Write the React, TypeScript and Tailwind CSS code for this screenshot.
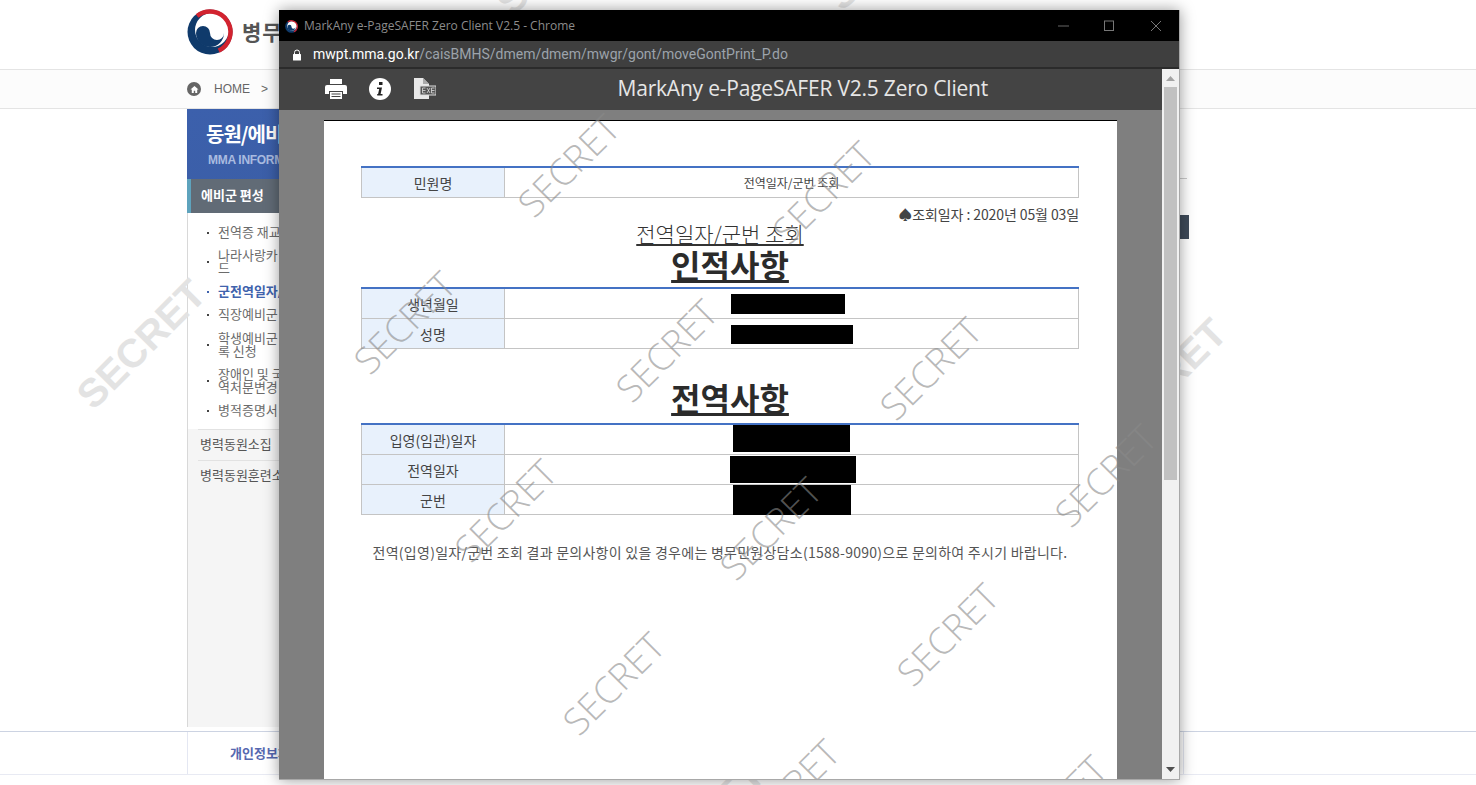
import React from 'react';

type Bar = { left: number; top: number; width: number; height: number };

const sideItems = [
  { lines: ['전역증 재교부'], h: 23 },
  { lines: ['나라사랑카', '드'], h: 36 },
  { lines: ['군전역일자/군번 조회'], h: 23, active: true },
  { lines: ['직장예비군'], h: 23 },
  { lines: ['학생예비군 편성', '록 신청'], h: 38 },
  { lines: ['장애인 및 국', '역처분변경'], h: 34 },
  { lines: ['병적증명서'], h: 25 },
];

const thinMarks = [
  [568, 165], [823, 192], [404, 322], [666, 350], [930, 368], [505, 510],
  [770, 528], [1105, 475], [947, 634], [613, 683], [788, 790], [1055, 806],
];
const boldMarks = [
  [141, 344], [1162, 383], [560, -50], [890, -55], [700, 825],
];

const Taegeuk = ({ size }: { size: number }) => (
  <svg width={size} height={size} viewBox="0 0 46 46" className="shrink-0">
    <circle cx="23" cy="23" r="22.5" fill="#0f3a6b" />
    <circle cx="25" cy="21" r="17" fill="#fff" />
    <path d="M10.1 7.1A20.5 20.5 0 1 1 31.7 41.6" fill="none" stroke="#d2232f" strokeWidth="4.5" />
    <path d="M9 24a7 7 0 0 1 14 0a7 7 0 0 0 14 0a14 14 0 0 1-28 0Z" fill="#0f3a6b" />
  </svg>
);

const Row = ({ label, value, bar, small, h = 30 }: { label: string; value?: string; bar?: Bar; small?: boolean; h?: number }) => (
  <div className="flex border-b border-[#c4c4c4]" style={{ height: h }}>
    <div className="w-[144px] shrink-0 border-x border-[#c4c4c4] bg-[#e8f1fc] pt-[1px] flex items-center justify-center text-[14px] text-[#444]">
      {label}
    </div>
    <div className={`relative flex-1 border-r border-[#c4c4c4] flex items-center justify-center text-[#444] ${small ? 'text-[12px]' : 'text-[14px]'}`}>
      {value}
      {bar && <div className="absolute bg-black" style={bar} />}
    </div>
  </div>
);

const Table = ({ children }: { children: React.ReactNode }) => (
  <div className="border-t-2 border-[#4472c4]">{children}</div>
);

export default function App() {
  return (
    <div className="relative h-[785px] w-[1476px] overflow-hidden bg-white font-['Noto_Sans_CJK_KR',sans-serif]">
      {/* page behind the popup */}
      <header className="h-[70px] border-b border-[#e4e4e4] flex items-center pl-[187px] gap-[9px] pb-[6px]">
        <Taegeuk size={46} />
        <span className="text-[21px] font-bold text-[#555] tracking-[1px]">병무청</span>
      </header>
      <div className="h-[39px] border-b border-[#e4e4e4] bg-[#fcfcfc] flex items-center pl-[187px] text-[12px] text-[#666]">
        <span className="w-[14px] h-[14px] rounded-full bg-[#666] flex items-center justify-center">
          <svg width="9" height="9" viewBox="0 0 10 10"><path d="M5 1 0.5 5H2v4h2.2V6.5h1.6V9H8V5h1.5z" fill="#fff" /></svg>
        </span>
        <span className="ml-[13px] font-['Liberation_Sans',sans-serif]">HOME</span>
        <span className="ml-[11px] font-['Liberation_Sans',sans-serif]">&gt;</span>
      </div>

      <div className="flex h-[622px] pl-[187px] pr-[287px]">
        <aside className="w-[240px] h-[618px] border-l border-[#d8d8d8] flex flex-col">
          <div className="h-[70px] -ml-px bg-gradient-to-br from-[#3c60ac] to-[#3b5ea6] pl-[19px] pt-[10px]">
            <div className="text-[20px] font-bold leading-[30px] text-white tracking-[-1px]">동원/에비군</div>
            <div className="pl-[2px] pt-[3px] text-[12px] font-bold leading-[16px] text-[#a9bbe0] font-['Liberation_Sans',sans-serif] tracking-[-0.3px]">MMA INFORMATION</div>
          </div>
          <div className="h-[34px] -ml-px border-l-4 border-[#5ea3bd] bg-[#616b76] pl-[10px] pb-[3px] flex items-center text-[13px] font-bold text-white">에비군 편성</div>
          <ul className="pt-[7px] pb-[7px] pl-[19px]">
            {sideItems.map((item) => (
              <li key={item.lines[0]} className="relative flex items-center pl-[11px] text-[13px] leading-[13px]" style={{ height: item.h }}>
                <span className={`absolute left-0 top-1/2 w-[2px] h-[2px] ${item.active ? 'bg-[#3f63ad]' : 'bg-[#444]'}`} />
                <span className={`whitespace-nowrap ${item.active ? 'font-bold text-[#3f63ad]' : 'text-[#6b6b6b]'}`}>
                  {item.lines.map((l) => <div key={l}>{l}</div>)}
                </span>
              </li>
            ))}
          </ul>
          <div className="flex-1 bg-[#f5f5f5] px-[10px] text-[13px] text-[#555]">
            <div className="h-[31px] border-t border-[#e2e2e2] pb-[3px] flex items-center pl-[2px]">병력동원소집</div>
            <div className="h-[31px] border-t border-[#e2e2e2] pb-[3px] flex items-center pl-[2px]">병력동원훈련소</div>
          </div>
        </aside>
        <div className="flex-1 pt-[69px]">
          <div className="ml-[752px] w-[8px] border-t border-[#ccc]" />
          <div className="ml-[752px] mt-[36px] w-[10px] h-[24px] bg-[#3e4a59]" />
        </div>
      </div>

      <footer className="h-[44px] border-t border-b border-t-[#ccd3e2] border-b-[#e8eaf3] pl-[187px] flex">
        <div className="w-[997px] border-x border-[#e4e7f2] pl-[42px] flex items-center text-[13px] font-bold text-[#5668b0]">개인정보처리방침</div>
      </footer>

      {/* page watermark, lies over the page content */}
      {boldMarks.map(([x, y]) => (
        <span
          key={`${x}-${y}`}
          className="absolute -translate-x-1/2 -translate-y-1/2 -rotate-45 text-[40px] font-bold leading-none text-[#e3e3e3] font-['Liberation_Sans',sans-serif] pointer-events-none"
          style={{ left: x, top: y }}
        >
          SECRET
        </span>
      ))}

      {/* popup window */}
      <div className="absolute left-[279px] top-[10px] w-[901px] h-[770px] flex flex-col border-r border-b border-[#a8a8a8] shadow-[0_0_14px_rgba(0,0,0,0.4)]">
        <div className="h-[31px] bg-black flex items-center pl-[6px] pt-[1px] text-[12px] text-[#8c8c8c] font-['Open_Sans',sans-serif]">
          <Taegeuk size={13} />
          <span className="ml-[6px]">MarkAny e-PageSAFER Zero Client V2.5 - Chrome</span>
          <div className="ml-auto flex items-center">
            <svg width="46" height="12" viewBox="0 0 46 12"><path d="M0 6h11" stroke="#666" /></svg>
            <svg width="46" height="12" viewBox="0 0 46 12"><rect x="0.5" y="1" width="9" height="9.5" fill="none" stroke="#777" /></svg>
            <svg width="29" height="12" viewBox="0 0 29 12"><path d="M1 1l10 10M11 1 1 11" stroke="#777" /></svg>
          </div>
        </div>
        <div className="h-[28px] bg-[#3f3f3f] border-b-2 border-[#2b2b2b] flex items-center pl-[13px] pt-[1px] text-[14px] font-['Roboto',sans-serif]">
          <svg width="10" height="12" viewBox="0 0 10 12"><path d="M2.5 5V3.5a2.5 2.5 0 0 1 5 0V5" fill="none" stroke="#fff" /><rect x="1" y="5" width="8" height="6.5" rx="0.5" fill="#fff" /></svg>
          <span className="ml-[11px] text-white">mwpt.mma.go.kr</span>
          <span className="text-[#9ca3ab]">/caisBMHS/dmem/dmem/mwgr/gont/moveGontPrint_P.do</span>
        </div>
        <div className="flex flex-1 min-h-0">
          <div className="flex-1 min-w-0 bg-[#7f7f7f] overflow-hidden">
            <div className="h-[41px] bg-[#444] flex items-center pl-[46px] pr-[174px] pb-[2px]">
              <svg width="22" height="20" viewBox="0 0 22 20">
                <path d="M5 0h12v5H5zM2 6h18a2 2 0 0 1 2 2v7h-4v-3H4v3H0V8a2 2 0 0 1 2-2z" fill="#fff" />
                <path d="M5 13h12v7H5z" fill="#fff" />
                <path d="M6.5 15h9M6.5 17.5h9" stroke="#444" />
              </svg>
              <svg className="ml-[22px]" width="22" height="22" viewBox="0 0 22 22">
                <circle cx="11" cy="11" r="11" fill="#fff" />
                <path d="M10 4h3.5v3H10zM8 9.5h5l-1.4 6.5H13.5v1.6H8.2v-1.6h.9l1.1-5H8z" fill="#222" />
              </svg>
              <svg className="ml-[22px]" width="23" height="21" viewBox="0 0 23 21">
                <path d="M1 0h9l6 6v15H1z" fill="#e8e8e8" />
                <path d="M10 0v6h6z" fill="#aaa" />
                <rect x="7" y="8" width="16" height="9" fill="#555" stroke="#ddd" />
                <path d="M9.5 10h3M9.5 12.5h3M9.5 15h3M9.5 10v5M14 10l3 5M17 10l-3 5M18.5 10h3M18.5 12.5h3M18.5 15h3M18.5 10v5" stroke="#ddd" strokeWidth="0.8" fill="none" />
              </svg>
              <span className="ml-auto text-[21px] text-[#e6e6e6] font-['Open_Sans',sans-serif] tracking-[-0.01em] whitespace-nowrap">MarkAny e-PageSAFER V2.5 Zero Client</span>
            </div>
            <div className="ml-[45px] mt-[10px] w-[793px] h-[700px] bg-white border-t border-black pl-[37px] pr-[38px] pt-[45px] text-[#333]">
              <Table><Row label="민원명" value="전역일자/군번 조회" small /></Table>
              <div className="mt-[7px] text-right text-[14px] leading-[19px] tracking-[-0.1px] text-[#444]">♠조회일자 : 2020년 05월 03일</div>
              <div className="text-center text-[21px] leading-[18px] font-light underline">전역일자/군번 조회</div>
              <div className="pt-[7px] pl-[20px] text-center text-[32px] leading-[30px] h-[37px] font-bold underline text-[#2b2b2b]">인적사항</div>
              <div className="mt-[8px]">
                <Table>
                  <Row label="생년월일" bar={{ left: 226, top: 5, width: 114, height: 20 }} />
                  <Row label="성명" bar={{ left: 226, top: 6, width: 122, height: 19 }} />
                </Table>
              </div>
              <div className="mt-[32px] pl-[20px] text-center text-[32px] leading-[32px] h-[42px] font-bold underline text-[#2b2b2b]">전역사항</div>
              <Table>
                <Row label="입영(임관)일자" bar={{ left: 228, top: 0, width: 117, height: 27 }} />
                <Row label="전역일자" bar={{ left: 225, top: 1, width: 126, height: 27 }} />
                <Row label="군번" bar={{ left: 228, top: 0, width: 118, height: 30 }} />
              </Table>
              <p className="mt-[28px] text-center text-[14px] leading-[19px] tracking-[0.26px] text-[#555] whitespace-nowrap">전역(입영)일자/군번 조회 결과 문의사항이 있을 경우에는 병무민원상담소(1588-9090)으로 문의하여 주시기 바랍니다.</p>
            </div>
          </div>
          <div className="w-[17px] bg-[#f1f1f1] flex flex-col items-center">
            <div className="h-[18px] flex items-center justify-center">
              <svg width="9" height="5" viewBox="0 0 9 5"><path d="M4.5 0 9 5H0z" fill="#a3a3a3" /></svg>
            </div>
            <div className="w-[13px] h-[393px] bg-[#c1c1c1]" />
            <div className="flex-1" />
            <div className="h-[19px] flex items-center justify-center">
              <svg width="9" height="5" viewBox="0 0 9 5"><path d="M0 0h9L4.5 5z" fill="#505050" /></svg>
            </div>
          </div>
        </div>
      </div>

      {/* popup watermark, over the scrolling area of the popup */}
      <div className="absolute left-[279px] top-[110px] w-[883px] h-[669px] overflow-hidden pointer-events-none">
        {thinMarks.map(([x, y]) => (
          <span
            key={`${x}-${y}`}
            className="absolute -translate-x-1/2 -translate-y-1/2 -rotate-45 text-[37px] font-light leading-none text-[#8a8a8a]/60 font-['Open_Sans',sans-serif]"
            style={{ left: x - 279, top: y - 110 }}
          >
            SECRET
          </span>
        ))}
      </div>
    </div>
  );
}
